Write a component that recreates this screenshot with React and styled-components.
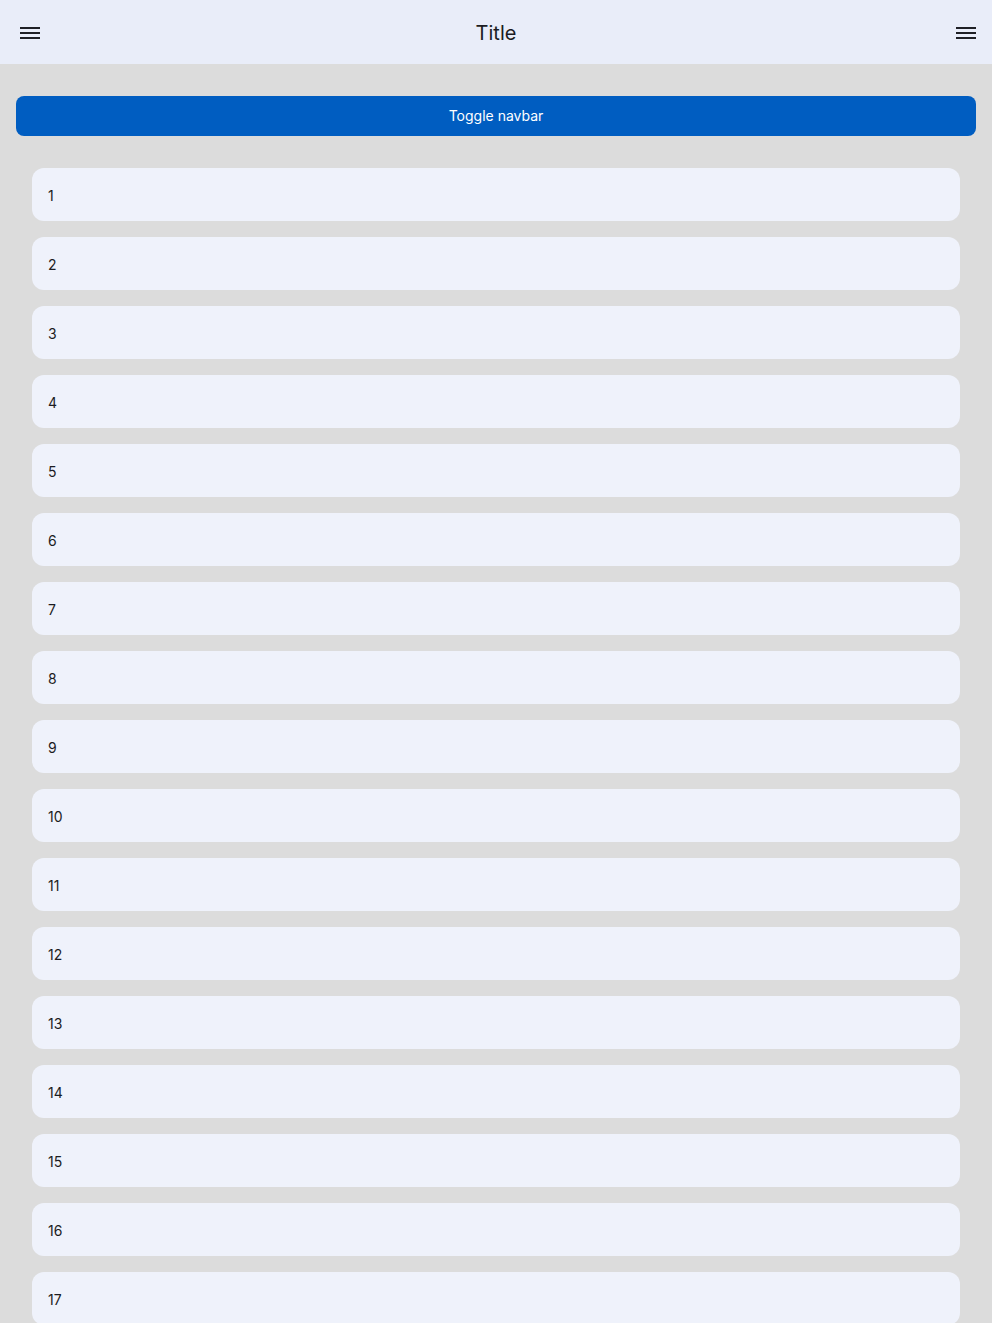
import React from "react";
import styled, { createGlobalStyle } from "styled-components";

const Global = createGlobalStyle`
  html, body { margin: 0; padding: 0; }
  body {
    background: #dcdcdc;
    font-family: Inter, "Noto Sans", "Liberation Sans", sans-serif;
    color: #1c1c22;
  }
`;

const Page = styled.div`
  display: flex;
  flex-direction: column;
  min-height: 100vh;
`;

const Header = styled.header`
  height: 64px;
  background: #e9edf9;
  display: grid;
  grid-template-columns: 1fr auto 1fr;
  align-items: center;
  padding: 2px 8px 0 12px;
  box-sizing: border-box;
`;

const IconButton = styled.button`
  width: 36px;
  height: 36px;
  border: none;
  background: transparent;
  padding: 0;
  display: flex;
  align-items: center;
  justify-content: center;
  color: #1f2026;
  cursor: pointer;
  justify-self: ${(p) => (p.$end ? "end" : "start")};
`;

const Title = styled.h1`
  margin: 0;
  font-size: 20px;
  font-weight: 400;
  color: #1c1c22;
  transform: translateX(-2px);
`;

const Main = styled.main`
  padding: 32px 16px 0;
  display: flex;
  flex-direction: column;
`;

const ToggleButton = styled.button`
  height: 40px;
  border: none;
  border-radius: 8px;
  background: #005dc1;
  color: #ffffff;
  font-family: inherit;
  font-size: 14px;
  font-weight: 400;
  padding: 0 0 2px;
  cursor: pointer;
`;

const List = styled.ul`
  list-style: none;
  margin: 32px 0 0;
  padding: 0 16px;
  display: flex;
  flex-direction: column;
  gap: 16px;
`;

const Item = styled.li`
  height: 53px;
  box-sizing: border-box;
  border-radius: 12px;
  background: #eff2fb;
  display: flex;
  align-items: center;
  padding: 1px 16px 0;
  font-size: 14px;
  color: #1c1c22;
`;

const Menu = () => (
  <svg width="20" height="12" viewBox="0 0 20 12" fill="currentColor">
    <rect x="0" y="0" width="20" height="2" />
    <rect x="0" y="5" width="20" height="2" />
    <rect x="0" y="10" width="20" height="2" />
  </svg>
);

export default function App() {
  const items = Array.from({ length: 20 }, (_, i) => i + 1);
  return (
    <Page>
      <Global />
      <Header>
        <IconButton aria-label="menu"><Menu /></IconButton>
        <Title>Title</Title>
        <IconButton $end aria-label="menu right"><Menu /></IconButton>
      </Header>
      <Main>
        <ToggleButton>Toggle navbar</ToggleButton>
        <List>
          {items.map((n) => (
            <Item key={n}>{n}</Item>
          ))}
        </List>
      </Main>
    </Page>
  );
}
